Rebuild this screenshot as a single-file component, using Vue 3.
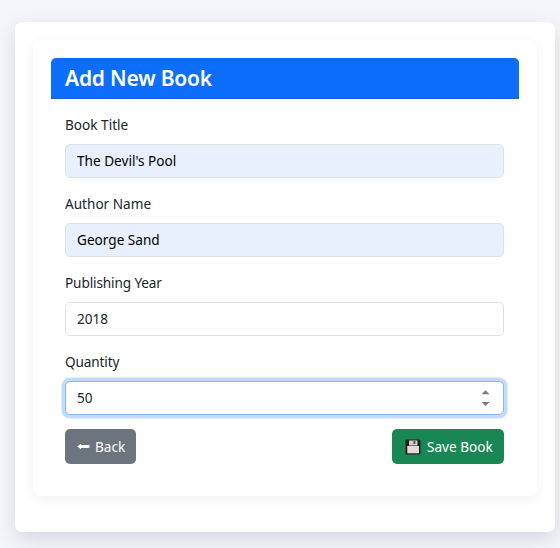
<script setup>
import { ref } from 'vue'

const title = ref("The Devil's Pool")
const author = ref('George Sand')
const year = ref('2018')
const quantity = ref('50')
</script>

<template>
  <main class="page">
    <section class="container">
      <div class="card">
        <header class="card-header"><h1>Add New Book</h1></header>
        <form class="card-body" @submit.prevent>
          <div class="field">
            <label for="title">Book Title</label>
            <input id="title" v-model="title" class="control filled" type="text" spellcheck="false" />
          </div>
          <div class="field">
            <label for="author">Author Name</label>
            <input id="author" v-model="author" class="control filled" type="text" spellcheck="false" />
          </div>
          <div class="field">
            <label for="year" class="tight">Publishing Year</label>
            <input id="year" v-model="year" class="control" type="text" />
          </div>
          <div class="field">
            <label for="quantity" class="tight">Quantity</label>
            <div class="control focused">
              <input id="quantity" v-model="quantity" class="bare" type="text" />
              <svg class="spinner" width="9" height="18" viewBox="0 0 9 18">
                <path d="M0.5 5.2 L4.5 1.2 L8.5 5.2 Z M0.5 13 L4.5 17 L8.5 13 Z" fill="#7b7c7e" />
              </svg>
            </div>
          </div>
          <div class="actions">
            <button type="button" class="btn back">
              <svg width="13" height="7" viewBox="0 0 13 7">
                <path d="M0.3 3.5 L4 0.7 V2.1 H11.6 Q12.7 2.1 12.7 3.5 Q12.7 4.9 11.6 4.9 H4 V6.3 Z" fill="#fff" />
              </svg>
              <span>Back</span>
            </button>
            <button type="submit" class="btn save">
              <svg width="16" height="16" viewBox="0 0 16 16">
                <path d="M0.5 0.5 H14.3 L15.5 1.7 V15.5 H0.5 Z" fill="#17221d" />
                <rect x="4" y="1.5" width="8.5" height="5" fill="#d0ccd0" />
                <rect x="8.5" y="2" width="1.8" height="3" fill="#4b504d" />
                <rect x="2.3" y="7" width="11.7" height="7.3" fill="#e5d9e0" />
              </svg>
              <span>Save Book</span>
            </button>
          </div>
        </form>
      </div>
    </section>
  </main>
</template>

<style>
body {
  margin: 0;
  background: #f4f6fb;
}
</style>

<style scoped>
.page {
  box-sizing: border-box;
  height: 548px;
  padding: 22px 5px 16px 15px;
  overflow: hidden;
  background: #f4f6fb;
  font-family: "Noto Sans", "Open Sans", sans-serif;
  font-size: 13.6px;
  color: #212529;
}
.container {
  box-sizing: border-box;
  height: 510px;
  padding: 18px;
  border-radius: 7px;
  background: #fff;
  box-shadow: 0 7px 22px rgba(0, 0, 0, 0.13);
}
.card {
  box-sizing: border-box;
  height: 456px;
  padding: 18px;
  border-radius: 7px;
  background: #fff;
  box-shadow: 0 3px 14px rgba(0, 0, 0, 0.06);
}
.card-header {
  box-sizing: border-box;
  height: 41px;
  padding: 0 14px;
  border-bottom: 1px solid #1b60cf;
  border-radius: 5px 5px 0 0;
  background: #0d6efd;
  color: #fff;
}
h1 {
  margin: 0;
  font-size: 21px;
  font-weight: 600;
  line-height: 41px;
  letter-spacing: -0.2px;
}
.card-body {
  padding: 15px 15px 0 14px;
}
.field {
  height: 79px;
}
label {
  display: block;
  height: 30px;
  line-height: 22px;
}
.tight {
  letter-spacing: -0.12px;
}
.control {
  box-sizing: border-box;
  display: block;
  width: 100%;
  height: 34px;
  padding: 0 11px 2px;
  border: 1px solid #dee2e6;
  border-radius: 5px;
  background: #fff;
  color: #212529;
  font: inherit;
  outline: none;
}
.filled {
  background: #e8f0fe;
  color: #000;
}
.focused {
  display: flex;
  align-items: center;
  padding-right: 13px;
  padding-bottom: 0;
  border-color: #86b7fe;
  box-shadow: 0 0 0 3.6px rgba(13, 110, 253, 0.25);
}
.bare {
  flex: 1;
  min-width: 0;
  padding: 0 0 2px;
  border: 0;
  outline: 0;
  background: none;
  color: inherit;
  font: inherit;
}
.actions {
  display: flex;
  justify-content: space-between;
  margin-top: -1px;
}
.btn {
  box-sizing: border-box;
  display: flex;
  align-items: center;
  height: 35px;
  padding: 0;
  border: 0;
  border-radius: 5px;
  color: #fff;
  font: inherit;
  white-space: nowrap;
}
.back {
  width: 71px;
  padding-left: 12px;
  gap: 5px;
  background: #6c757d;
}
.save {
  width: 112px;
  padding-left: 13px;
  gap: 6px;
  background: #198754;
}
</style>
